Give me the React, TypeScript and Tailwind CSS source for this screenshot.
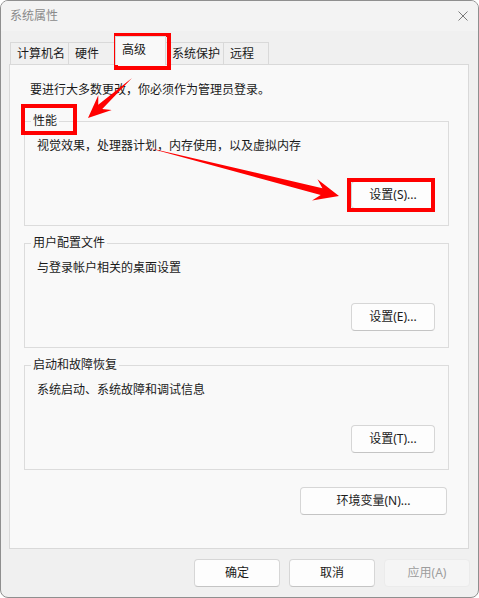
import React from 'react';

type Pt = [number, number];

// arrow polygon: thin tail, swept-back barbs
function arrowPoints(tail: Pt, tip: Pt, headLen: number, headW: number, shaftW: number) {
  const dx = tip[0] - tail[0];
  const dy = tip[1] - tail[1];
  const len = Math.hypot(dx, dy);
  const u: Pt = [dx / len, dy / len];
  const n: Pt = [-u[1], u[0]];
  const at = (back: number, side: number): string =>
    `${tip[0] - u[0] * back + n[0] * side},${tip[1] - u[1] * back + n[1] * side}`;
  return [
    `${tail[0]},${tail[1]}`,
    at(headLen * 0.72, shaftW),
    at(headLen, headW),
    `${tip[0]},${tip[1]}`,
    at(headLen, -headW),
    at(headLen * 0.72, -shaftW),
  ].join(' ');
}

function Btn({ label, className = '' }: { label: string; className?: string }) {
  return (
    <button className={`h-[28px] rounded-[4px] border border-[#d6d6d6] border-b-[#c4c4c4] bg-[#fdfdfd] text-[12px] leading-[16px] text-[#1a1a1a] ${className}`}>
      {label}
    </button>
  );
}

function Group({ title, desc, btn }: { title: string; desc: string; btn: string }) {
  return (
    <fieldset className="ml-[14px] w-[425px] border border-[#dcdcdc] pl-[6px] pr-[13px] pb-[16px]">
      <legend className="px-[2px] text-[12px] leading-[16px] text-[#1a1a1a]">{title}</legend>
      <p className="ml-[6px] mt-[9px] text-[12px] leading-[16px] text-[#1a1a1a]">{desc}</p>
      <div className="mt-[27px] flex justify-end">
        <Btn label={btn} className="w-[84px]" />
      </div>
    </fieldset>
  );
}

const tabs = [
  { label: '计算机名', w: 'w-[59px]' },
  { label: '硬件', w: 'w-[47px]' },
  { label: '高级', w: 'w-[51px]', active: true },
  { label: '系统保护', w: 'w-[59px]' },
  { label: '远程', w: 'w-[46px]' },
];

export default function App() {
  return (
    <div className="relative flex h-[598px] w-[479px] flex-col overflow-hidden rounded-[8px] border border-[#8f8f8f] bg-[#f0f0f0] font-['Noto_Sans','Noto_Sans_CJK_SC',sans-serif]">
      {/* title bar */}
      <div className="flex h-[30px] items-center justify-between bg-[#f3f3f3] pl-[9px] pr-[10px]">
        <span className="text-[12px] leading-[16px] text-[#8a8a8a]">系统属性</span>
        <svg width="10" height="10" viewBox="0 0 10 10" className="mr-[0px]">
          <path d="M0.5 0.5 L9.5 9.5 M9.5 0.5 L0.5 9.5" stroke="#7a7a7a" strokeWidth="1" fill="none" />
        </svg>
      </div>

      {/* tabs */}
      <div className="mt-[5px] flex h-[28px] items-end pl-[9px]">
        {tabs.map(t =>
          t.active ? (
            <div
              key={t.label}
              className={`relative z-10 -mb-[1px] h-[29px] ${t.w} border border-b-0 border-[#d9d9d9] bg-[#f9f9f9] pl-[6px] pt-[5px] text-[12px] leading-[16px] text-[#1a1a1a]`}
            >
              {t.label}
            </div>
          ) : (
            <div
              key={t.label}
              className={`h-[22px] ${t.w} -ml-[1px] border border-b-0 border-[#d9d9d9] bg-[#f0f0f0] pl-[6px] pt-[3px] text-[12px] leading-[16px] text-[#1a1a1a] first:ml-0`}
            >
              {t.label}
            </div>
          )
        )}
      </div>

      {/* panel */}
      <div className="ml-[8px] flex h-[485px] w-[460px] flex-col border border-[#d9d9d9] bg-[#f9f9f9] pt-[17px]">
        <p className="pl-[20px] text-[12px] leading-[16px] text-[#1a1a1a]">要进行大多数更改，你必须作为管理员登录。</p>
        <div className="mt-[15px]">
          <Group title="性能" desc="视觉效果，处理器计划，内存使用，以及虚拟内存" btn="设置(S)..." />
        </div>
        <div className="mt-[9px]">
          <Group title="用户配置文件" desc="与登录帐户相关的桌面设置" btn="设置(E)..." />
        </div>
        <div className="mt-[9px]">
          <Group title="启动和故障恢复" desc="系统启动、系统故障和调试信息" btn="设置(T)..." />
        </div>
        <div className="mt-[17px] flex justify-end pr-[21px]">
          <Btn label="环境变量(N)..." className="w-[147px]" />
        </div>
      </div>

      {/* dialog buttons */}
      <div className="mt-[10px] flex justify-end gap-[9px] pr-[8px]">
        <Btn label="确定" className="w-[86px]" />
        <Btn label="取消" className="w-[86px]" />
        <button className="h-[28px] w-[86px] rounded-[4px] border border-[#ebebeb] bg-[#f5f5f5] text-[12px] leading-[16px] text-[#9d9d9d]">
          应用(A)
        </button>
      </div>

      {/* annotation overlay */}
      <div className="pointer-events-none absolute left-[113px] top-[32px] h-[37px] w-[57px] border-[4px] border-[#ff0000]" />
      <div className="pointer-events-none absolute left-[20px] top-[103px] h-[31px] w-[56px] border-[4px] border-[#ff0000]" />
      <div className="pointer-events-none absolute left-[346px] top-[177px] h-[34px] w-[88px] border-[4px] border-[#ff0000]" />
      <svg className="pointer-events-none absolute left-[-1px] top-[-1px]" width="479" height="598" viewBox="0 0 479 598">
        <polygon points={arrowPoints([132, 78], [88, 118], 23, 10, 3)} fill="#ff0000" />
        <polygon points={arrowPoints([145, 147], [339, 196], 25, 11, 3.5)} fill="#ff0000" />
      </svg>
    </div>
  );
}
